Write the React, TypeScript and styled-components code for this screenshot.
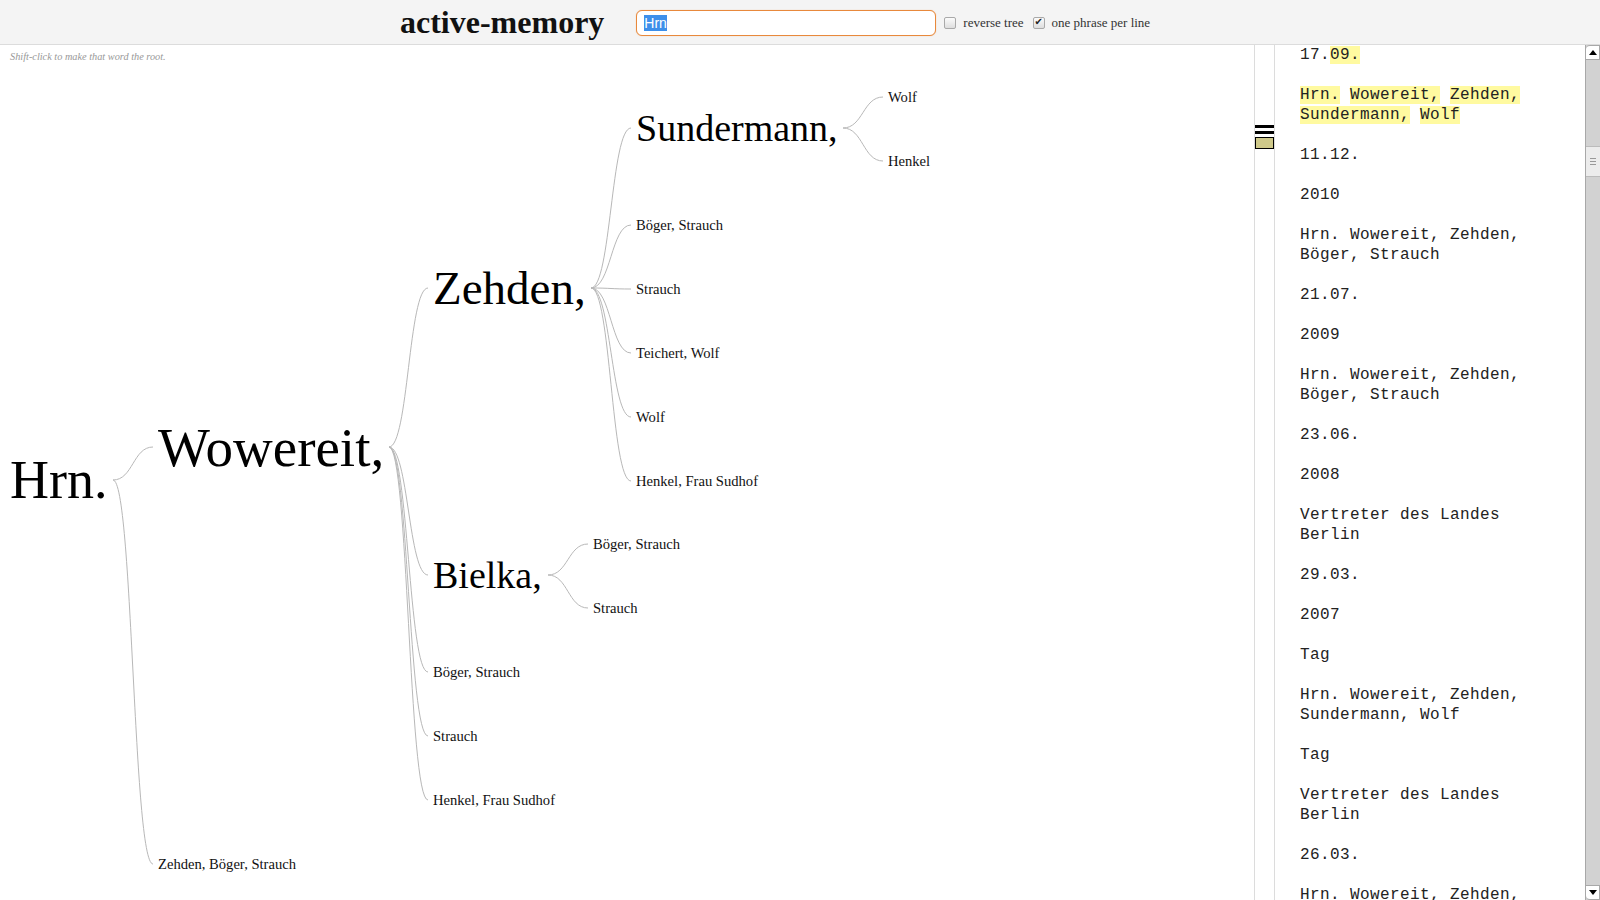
import React, { useEffect, useRef } from "react";
import styled, { createGlobalStyle } from "styled-components";

const GlobalStyle = createGlobalStyle`
  html, body { margin: 0; padding: 0; background: #fff; overflow: hidden; }
  #root { height: 100vh; overflow: hidden; }
`;

const HEADER_H = 45;
const HINT_H = 24;
const CANVAS_TOP = HEADER_H + HINT_H;
const SMALL = 14.6;

type TreeNode = {
  label: string;
  x: number;
  y: number;
  size?: number;
  out?: number;
  children?: TreeNode[];
};

const tree: TreeNode = {
  label: "Hrn.", x: 10, y: 480, size: 54, out: 113,
  children: [
    {
      label: "Wowereit,", x: 158, y: 447, size: 55, out: 389,
      children: [
        {
          label: "Zehden,", x: 433, y: 288, size: 47, out: 591,
          children: [
            {
              label: "Sundermann,", x: 636, y: 128, size: 38, out: 843,
              children: [
                { label: "Wolf", x: 888, y: 97 },
                { label: "Henkel", x: 888, y: 161 },
              ],
            },
            { label: "Böger, Strauch", x: 636, y: 225 },
            { label: "Strauch", x: 636, y: 289 },
            { label: "Teichert, Wolf", x: 636, y: 353 },
            { label: "Wolf", x: 636, y: 417 },
            { label: "Henkel, Frau Sudhof", x: 636, y: 481 },
          ],
        },
        {
          label: "Bielka,", x: 433, y: 575, size: 38, out: 548,
          children: [
            { label: "Böger, Strauch", x: 593, y: 544 },
            { label: "Strauch", x: 593, y: 608 },
          ],
        },
        { label: "Böger, Strauch", x: 433, y: 672 },
        { label: "Strauch", x: 433, y: 736 },
        { label: "Henkel, Frau Sudhof", x: 433, y: 800 },
      ],
    },
    { label: "Zehden, Böger, Strauch", x: 158, y: 864 },
  ],
};

type Seg = { t: string; hl?: boolean };
const paragraphs: Seg[][] = [
  [{ t: "17." }, { t: "09.", hl: true }],
  [
    { t: "Hrn.", hl: true }, { t: " " }, { t: "Wowereit,", hl: true }, { t: " " },
    { t: "Zehden,", hl: true }, { t: " " }, { t: "Sundermann,", hl: true }, { t: " " },
    { t: "Wolf", hl: true },
  ],
  [{ t: "11.12." }],
  [{ t: "2010" }],
  [{ t: "Hrn. Wowereit, Zehden, Böger, Strauch" }],
  [{ t: "21.07." }],
  [{ t: "2009" }],
  [{ t: "Hrn. Wowereit, Zehden, Böger, Strauch" }],
  [{ t: "23.06." }],
  [{ t: "2008" }],
  [{ t: "Vertreter des Landes Berlin" }],
  [{ t: "29.03." }],
  [{ t: "2007" }],
  [{ t: "Tag" }],
  [{ t: "Hrn. Wowereit, Zehden, Sundermann, Wolf" }],
  [{ t: "Tag" }],
  [{ t: "Vertreter des Landes Berlin" }],
  [{ t: "26.03." }],
  [{ t: "Hrn. Wowereit, Zehden, Böger, Strauch" }],
];

const Page = styled.div`
  display: flex;
  flex-direction: column;
  height: 100vh;
  width: 1600px;
  overflow: hidden;
`;

const Header = styled.header`
  height: 42px;
  padding-top: 2px;
  flex: 0 0 auto;
  display: flex;
  align-items: center;
  padding-left: 400px;
  background: #f4f4f4;
  border-bottom: 1px solid #dcdcdc;
`;

const Title = styled.h1`
  margin: 0;
  font-family: "Liberation Serif", "Times New Roman", serif;
  font-weight: bold;
  font-size: 32px;
  line-height: 1;
  color: #111;
  position: relative;
  top: -1px;
`;

const Search = styled.input`
  margin-left: 32px;
  box-sizing: border-box;
  width: 300px;
  height: 26px;
  padding: 0 7px;
  border: 1px solid #e8893c;
  border-radius: 6px;
  background: #fff;
  font-family: "Liberation Sans", Arial, sans-serif;
  font-size: 14px;
  color: #000;
  outline: none;
  box-shadow: 0 0 1px rgba(232, 137, 60, 0.6);
  &::selection {
    background: #3d8fea;
    color: #fff;
  }
`;

const Option = styled.label<{ $gap: number }>`
  display: flex;
  align-items: center;
  margin-left: ${(p) => p.$gap}px;
  font-family: "Liberation Serif", "Times New Roman", serif;
  font-size: 13px;
  color: #333;
`;

const Check = styled.input`
  appearance: none;
  -webkit-appearance: none;
  margin: 0 7px 0 0;
  width: 12px;
  height: 12px;
  border: 1px solid #a9a9a9;
  border-radius: 2px;
  background: linear-gradient(#fbfbfb, #dedede);
  position: relative;
  &:checked::after {
    content: "✔";
    position: absolute;
    left: 1px;
    top: -2px;
    font-size: 10px;
    font-family: "DejaVu Sans", sans-serif;
    color: #222;
  }
`;

const Main = styled.div`
  flex: 1;
  display: flex;
  min-height: 0;
  overflow: hidden;
`;

const TreePane = styled.section`
  flex: 1;
  display: flex;
  flex-direction: column;
  min-width: 0;
`;

const Hint = styled.div`
  height: ${HINT_H}px;
  line-height: ${HINT_H}px;
  padding-left: 10px;
  font-family: "Liberation Serif", "Times New Roman", serif;
  font-style: italic;
  font-size: 10.3px;
  color: #999;
`;

const Canvas = styled.div`
  flex: 1;
  position: relative;
`;

const Links = styled.svg`
  position: absolute;
  left: 0;
  top: 0;
  width: 100%;
  height: 100%;
  overflow: visible;
`;

const Word = styled.span<{ $size: number }>`
  position: absolute;
  white-space: nowrap;
  transform: translateY(-50%);
  font-family: "Liberation Serif", "Times New Roman", serif;
  font-size: ${(p) => p.$size}px;
  line-height: 1;
  color: ${(p) => (p.$size > 20 ? "#000" : "#111")};
  cursor: pointer;
`;

const Minimap = styled.aside`
  flex: 0 0 19px;
  height: 848px;
  border: 1px solid #dcdcdc;
  border-top: none;
  display: flex;
  flex-direction: column;
  padding-top: 80px;
  gap: 3px;
`;

const Mark = styled.div<{ $hl?: boolean }>`
  height: ${(p) => (p.$hl ? 10 : 3)}px;
  background: ${(p) => (p.$hl ? "#cfc98a" : "#000")};
  border: ${(p) => (p.$hl ? "1px solid #000" : "none")};
`;

const TextPane = styled.section`
  flex: 0 0 310px;
  box-sizing: border-box;
  padding-left: 25px;
  overflow: hidden;
`;

const TextFlow = styled.div`
  width: 245px;
  font-family: "Liberation Mono", "Courier New", monospace;
  font-size: 16px;
  letter-spacing: 0.4px;
  line-height: 20px;
  color: #222;
`;

const Para = styled.p`
  margin: 0 0 20px;
`;

const Highlight = styled.span`
  background: #fffaa0;
`;

const Scrollbar = styled.div`
  flex: 0 0 15px;
  display: flex;
  flex-direction: column;
  background: #d2d2d2;
  border-left: 1px solid #a8a8a8;
  box-sizing: border-box;
`;

const ArrowBtn = styled.div<{ $up?: boolean }>`
  height: 15px;
  flex: 0 0 15px;
  background: #fff;
  border: 1px solid #a8a8a8;
  border-left: none;
  box-sizing: border-box;
  border-radius: ${(p) => (p.$up ? "4px 0 0 0" : "0 0 0 4px")};
  display: flex;
  align-items: center;
  justify-content: center;
  &::after {
    content: "";
    width: 0;
    height: 0;
    border-left: 4px solid transparent;
    border-right: 4px solid transparent;
    ${(p) => (p.$up ? "border-bottom: 5px solid #000;" : "border-top: 5px solid #000;")}
  }
`;

const Track = styled.div`
  flex: 1;
`;

const Thumb = styled.div`
  margin-top: 86px;
  height: 31px;
  background: #ececec;
  border-top: 1px solid #bbb;
  border-bottom: 1px solid #bbb;
  box-sizing: border-box;
  display: flex;
  flex-direction: column;
  align-items: center;
  justify-content: center;
  gap: 2px;
`;

const Grip = styled.div`
  width: 6px;
  height: 1px;
  background: #999;
`;

function collect(node: TreeNode, words: TreeNode[], paths: string[]) {
  words.push(node);
  (node.children || []).forEach((c) => {
    const x0 = node.out ?? node.x;
    const y0 = node.y - CANVAS_TOP;
    const x1 = c.x - 5;
    const y1 = c.y - CANVAS_TOP;
    const mx = (x0 + x1) / 2;
    paths.push(`M${x0},${y0} C${mx},${y0} ${mx},${y1} ${x1},${y1}`);
    collect(c, words, paths);
  });
}

export default function App() {
  const inputRef = useRef<HTMLInputElement>(null);
  useEffect(() => {
    const el = inputRef.current;
    if (el) {
      el.focus();
      el.select();
    }
  }, []);

  const words: TreeNode[] = [];
  const paths: string[] = [];
  collect(tree, words, paths);

  return (
    <Page>
      <GlobalStyle />
      <Header>
        <Title>active-memory</Title>
        <Search ref={inputRef} defaultValue="Hrn" />
        <Option $gap={8}>
          <Check type="checkbox" />
          reverse tree
        </Option>
        <Option $gap={9}>
          <Check type="checkbox" defaultChecked />
          one phrase per line
        </Option>
      </Header>
      <Main>
        <TreePane>
          <Hint>Shift-click to make that word the root.</Hint>
          <Canvas>
            <Links>
              {paths.map((d, i) => (
                <path key={i} d={d} fill="none" stroke="#b8b8b8" strokeWidth={1} />
              ))}
            </Links>
            {words.map((w, i) => (
              <Word
                key={i}
                $size={w.size ?? SMALL}
                style={{ left: w.x, top: w.y - CANVAS_TOP }}
              >
                {w.label}
              </Word>
            ))}
          </Canvas>
        </TreePane>
        <Minimap>
          <Mark />
          <Mark />
          <Mark $hl />
        </Minimap>
        <TextPane>
          <TextFlow>
            {paragraphs.map((p, i) => (
              <Para key={i}>
                {p.map((s, j) =>
                  s.hl ? <Highlight key={j}>{s.t}</Highlight> : <React.Fragment key={j}>{s.t}</React.Fragment>
                )}
              </Para>
            ))}
          </TextFlow>
        </TextPane>
        <Scrollbar>
          <ArrowBtn $up />
          <Track>
            <Thumb>
              <Grip />
              <Grip />
              <Grip />
            </Thumb>
          </Track>
          <ArrowBtn />
        </Scrollbar>
      </Main>
    </Page>
  );
}
